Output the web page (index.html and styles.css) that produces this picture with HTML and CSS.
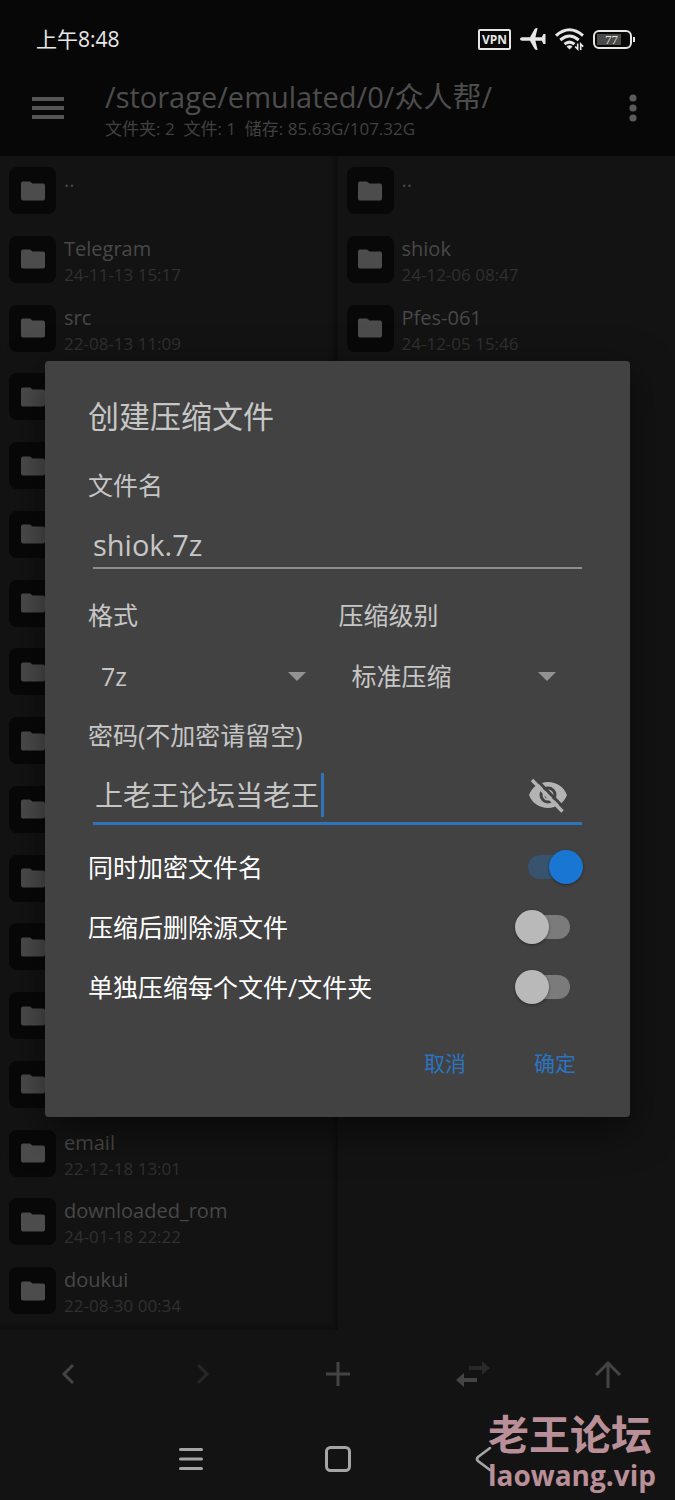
FILE: index.html
```html
<!DOCTYPE html>
<html lang="zh-CN">
<head>
<meta charset="utf-8">
<meta name="viewport" content="width=device-width, initial-scale=1">
<title>创建压缩文件</title>
<link rel="stylesheet" href="styles.css">
</head>
<body>
<svg class="defs" aria-hidden="true">
  <symbol id="folder" viewBox="0 0 24 20"><path d="M2 0.500h7l2.500 2H22a2 2 0 0 1 2 2V17.500a2 2 0 0 1-2 2H2a2 2 0 0 1-2-2v-15a2 2 0 0 1 2-2z"/></symbol>
</svg>
<div class="screen">
  <header class="top">
    <div class="status">
      <time class="clock">上午8:48</time>
      <div class="status-icons">
        <span class="vpn">VPN</span>
        <svg width="26" height="22" viewBox="0 0 26 22" fill="#e6e6e6"><path d="M0 11Q0 9.300 2.200 9.300H10L14.500 1.200Q15.200 0 17.600 0L15.400 9.300H21.800L23.400 6H25.500V16H23.400L21.800 12.700H15.400L17.600 22Q15.200 22 14.500 20.800L10 12.700H2.200Q0 12.700 0 11z"/></svg>
        <svg width="29" height="22" viewBox="0 0 29 22" fill="none" stroke="#e6e6e6" stroke-width="3"><path d="M1 7.700Q14.500-4.200 28 7.700M5.300 12Q14.500 4 23.700 12M9.500 16.200Q14.500 12 19.500 16.200"/><path d="M11.500 18.500Q14.500 16 17.500 18.500L14.500 21.500z" fill="#e6e6e6" stroke="none"/><path d="M22.700 15.500V21L20.200 18.600M25.700 22V16L28.200 18.600" stroke-width="1.600"/></svg>
        <span class="battery"><span class="battery-level">77</span></span>
      </div>
    </div>
    <div class="appbar">
      <button class="icon-btn" aria-label="菜单"><svg width="32" height="24" viewBox="0 0 32 24" fill="#555"><path d="M0 1h32v4H0zM0 10h32v4H0zM0 19h32v4H0z"/></svg></button>
      <div class="heading">
        <h1 class="path">/storage/emulated/0/众人帮/</h1>
        <p class="stats">文件夹: 2  文件: 1  储存: 85.63G/107.32G</p>
      </div>
      <button class="icon-btn" aria-label="更多"><svg width="8" height="30" viewBox="0 0 8 30" fill="#5a5a5a"><circle cx="4" cy="5" r="3.600"/><circle cx="4" cy="15" r="3.600"/><circle cx="4" cy="25" r="3.600"/></svg></button>
    </div>
  </header>

  <main class="panes">
    <ul class="pane pane-left">
      <li class="row"><span class="tile"><svg class="folder"><use href="#folder"/></svg></span><span class="name">..</span></li>
      <li class="row"><span class="tile"><svg class="folder"><use href="#folder"/></svg></span><div><div class="name">Telegram</div><div class="date">24-11-13 15:17</div></div></li>
      <li class="row"><span class="tile"><svg class="folder"><use href="#folder"/></svg></span><div><div class="name">src</div><div class="date">22-08-13 11:09</div></div></li>
      <li class="row"><span class="tile"><svg class="folder"><use href="#folder"/></svg></span></li>
      <li class="row"><span class="tile"><svg class="folder"><use href="#folder"/></svg></span></li>
      <li class="row"><span class="tile"><svg class="folder"><use href="#folder"/></svg></span></li>
      <li class="row"><span class="tile"><svg class="folder"><use href="#folder"/></svg></span></li>
      <li class="row"><span class="tile"><svg class="folder"><use href="#folder"/></svg></span></li>
      <li class="row"><span class="tile"><svg class="folder"><use href="#folder"/></svg></span></li>
      <li class="row"><span class="tile"><svg class="folder"><use href="#folder"/></svg></span></li>
      <li class="row"><span class="tile"><svg class="folder"><use href="#folder"/></svg></span></li>
      <li class="row"><span class="tile"><svg class="folder"><use href="#folder"/></svg></span></li>
      <li class="row"><span class="tile"><svg class="folder"><use href="#folder"/></svg></span></li>
      <li class="row"><span class="tile"><svg class="folder"><use href="#folder"/></svg></span></li>
      <li class="row"><span class="tile"><svg class="folder"><use href="#folder"/></svg></span><div><div class="name">email</div><div class="date">22-12-18 13:01</div></div></li>
      <li class="row"><span class="tile"><svg class="folder"><use href="#folder"/></svg></span><div><div class="name">downloaded_rom</div><div class="date">24-01-18 22:22</div></div></li>
      <li class="row"><span class="tile"><svg class="folder"><use href="#folder"/></svg></span><div><div class="name">doukui</div><div class="date">22-08-30 00:34</div></div></li>
    </ul>
    <ul class="pane">
      <li class="row"><span class="tile"><svg class="folder"><use href="#folder"/></svg></span><span class="name">..</span></li>
      <li class="row"><span class="tile"><svg class="folder"><use href="#folder"/></svg></span><div><div class="name">shiok</div><div class="date">24-12-06 08:47</div></div></li>
      <li class="row"><span class="tile"><svg class="folder"><use href="#folder"/></svg></span><div><div class="name">Pfes-061</div><div class="date">24-12-05 15:46</div></div></li>
    </ul>
  </main>

  <footer>
    <div class="toolbar">
      <button class="icon-btn" aria-label="后退"><svg width="14" height="20" viewBox="0 0 14 20" fill="none" stroke="#444" stroke-width="3"><path d="M12 1L3 10l9 9"/></svg></button>
      <button class="icon-btn" aria-label="前进" disabled><svg width="14" height="20" viewBox="0 0 14 20" fill="none" stroke="#262626" stroke-width="3"><path d="M2 1l9 9-9 9"/></svg></button>
      <button class="icon-btn" aria-label="新建"><svg width="24" height="24" viewBox="0 0 24 24" fill="none" stroke="#444" stroke-width="3"><path d="M12 0v24M0 12h24"/></svg></button>
      <button class="icon-btn" aria-label="同步"><svg width="34" height="26" viewBox="0 0 34 26"><path fill="#292929" d="M13 5h13V0l8 7-8 7V9H13z"/><path fill="#444" d="M21 17H8v-5l-8 7 8 7v-5h13z"/></svg></button>
      <button class="icon-btn" aria-label="上级"><svg width="28" height="28" viewBox="0 0 28 28" fill="none" stroke="#444" stroke-width="3"><path d="M14 28V2M2 15L14 3l12 12"/></svg></button>
    </div>
    <nav class="sysnav">
      <button class="icon-btn" aria-label="最近任务"><svg width="24" height="24" viewBox="0 0 24 24" stroke="#a5a5a5" stroke-width="3" stroke-linecap="round"><path d="M1.500 2.500h21M1.500 12h21M1.500 21.500h21"/></svg></button>
      <button class="icon-btn" aria-label="主屏幕"><svg width="26" height="26" viewBox="0 0 26 26" fill="none" stroke="#a5a5a5" stroke-width="3"><rect x="1.500" y="1.500" width="23" height="23" rx="4"/></svg></button>
      <button class="icon-btn" aria-label="返回"><svg width="18" height="26" viewBox="0 0 18 26" fill="none" stroke="#a5a5a5" stroke-width="2.600" stroke-linecap="round"><path d="M15 2L3 11Q1 13 3 15l12 9"/></svg></button>
    </nav>
  </footer>

  <div class="overlay">
    <form class="dialog" role="dialog" aria-labelledby="dlg-title">
      <h2 class="dialog-title" id="dlg-title">创建压缩文件</h2>

      <label class="label" for="filename">文件名</label>
      <input class="text-input filename" id="filename" type="text" value="shiok.7z">

      <div class="options">
        <div>
          <label class="label" for="format">格式</label>
          <div class="select-box">
            <select class="select" id="format"><option>7z</option></select>
            <svg class="arrow" viewBox="0 0 18 9"><path d="M0 0h18L9 9z"/></svg>
          </div>
        </div>
        <div>
          <label class="label" for="level">压缩级别</label>
          <div class="select-box">
            <select class="select" id="level"><option>标准压缩</option></select>
            <svg class="arrow" viewBox="0 0 18 9"><path d="M0 0h18L9 9z"/></svg>
          </div>
        </div>
      </div>

      <label class="label" for="password">密码(不加密请留空)</label>
      <div class="password">
        <input class="text-input password-input" id="password" type="text" value="上老王论坛当老王">
        <span class="caret"></span>
        <button class="icon-btn eye" type="button" aria-label="隐藏密码"><svg width="38" height="32" viewBox="0 0 38 32"><path fill="#b4b4b4" fill-rule="evenodd" d="M0 16C3 8 10.500 3 19 3s16 5 19 13c-3 8-10.500 13-19 13S3 24 0 16zM19 7.500a8.500 8.500 0 1 0 0 17 8.500 8.500 0 0 0 0-17z"/><circle cx="19" cy="16" r="5.500" fill="#b4b4b4"/><circle cx="18" cy="17" r="2.500" fill="#6a6a6a"/><path d="M6-1l31 32" stroke="#424242" stroke-width="3"/><path d="M3 1l30.500 31.500" stroke="#b4b4b4" stroke-width="3.400"/></svg></button>
      </div>

      <div class="switches">
        <label class="switch-row"><span class="switch-text">同时加密文件名</span><input class="switch" type="checkbox" checked></label>
        <label class="switch-row"><span class="switch-text">压缩后删除源文件</span><input class="switch" type="checkbox"></label>
        <label class="switch-row"><span class="switch-text">单独压缩每个文件/文件夹</span><input class="switch" type="checkbox"></label>
      </div>

      <div class="actions">
        <button class="action" type="button">取消</button>
        <button class="action" type="button">确定</button>
      </div>
    </form>
  </div>

  <div class="watermark">
    <div class="mark-name">老王论坛</div>
    <div class="mark-site">laowang.vip</div>
  </div>
</div>
</body>
</html>
```
FILE: styles.css
```css
* {
  box-sizing: border-box;
}

body {
  margin: 0;
  background: #131313;
  font-family: "Open Sans", "Noto Sans CJK SC", sans-serif;
}

h1, h2, p, ul {
  margin: 0;
  padding: 0;
  font-weight: 400;
}

button, input, select {
  margin: 0;
  padding: 0;
  border: 0;
  outline: 0;
  background: none;
  color: inherit;
  font: inherit;
}

svg {
  display: block;
  overflow: visible;
}

.defs {
  position: absolute;
  width: 0;
  height: 0;
}

.screen {
  position: relative;
  display: flex;
  flex-direction: column;
  min-height: 100vh;
}

.icon-btn {
  display: flex;
  align-items: center;
  justify-content: center;
}

/* Status bar and app bar */

.top {
  background: #070707;
}

.status {
  display: flex;
  align-items: center;
  justify-content: space-between;
  height: 78px;
  padding: 0 43px 2px 36px;
}

.clock {
  color: #e8e8e8;
  font-size: 21px;
}

.status-icons {
  display: flex;
  align-items: center;
  gap: 9px;
  padding-top: 2px;
}

.vpn {
  padding: 0 2px;
  border: 2px solid #e6e6e6;
  border-radius: 2px;
  color: #e6e6e6;
  font-size: 12px;
  font-weight: 700;
  line-height: 17px;
}

.battery {
  position: relative;
  width: 39px;
  height: 19px;
  padding: 2px;
  border: 2px solid #e6e6e6;
  border-radius: 6px;
}

.battery::after {
  content: "";
  position: absolute;
  top: 5px;
  right: -5px;
  width: 2px;
  height: 5px;
  background: #e6e6e6;
}

.battery-level {
  display: block;
  width: 77%;
  padding-left: 8px;
  background: #4a4a4a;
  color: #e6e6e6;
  font-family: "Liberation Serif", serif;
  font-size: 13px;
  line-height: 11px;
}

.appbar {
  display: flex;
  align-items: center;
  height: 78px;
  padding: 0 38px 14px 32px;
}

.appbar > .icon-btn {
  margin-bottom: 4px;
}

.heading {
  flex: 1;
  padding-left: 41px;
}

.path {
  color: #4d4d4d;
  font-size: 29px;
  line-height: 38px;
}

.stats {
  color: #414141;
  font-size: 17px;
  line-height: 26px;
  white-space: pre;
}

/* File panes */

.panes {
  display: grid;
  flex: 1;
  grid-template-columns: 1fr 1fr;
}

.pane {
  display: grid;
  grid-template-rows: repeat(17, 1fr);
  padding-bottom: 5px;
  background: #131313;
  list-style: none;
}

.pane-left {
  box-shadow: inset -4px -4px 4px #0e0e0e;
}

.row {
  display: flex;
  gap: 8px;
  padding: 11px 9px 0;
}

.tile {
  display: flex;
  flex: none;
  align-items: center;
  justify-content: center;
  width: 47px;
  height: 47px;
  border-radius: 8px;
  background: #080808;
}

.folder {
  width: 24px;
  height: 20px;
  fill: #4c4c4c;
}

.name {
  color: #484848;
  font-size: 20px;
  line-height: 26px;
}

.date {
  color: #303030;
  font-size: 17px;
  line-height: 26px;
}

/* Bottom bars */

.toolbar {
  display: grid;
  grid-template-columns: repeat(5, 1fr);
  height: 88px;
}

.sysnav {
  display: grid;
  grid-template-columns: repeat(3, 1fr);
  width: 65%;
  height: 82px;
  margin: 0 auto;
}

/* Dialog */

.overlay {
  position: absolute;
  inset: 0;
  display: flex;
  align-items: center;
  padding: 0 45px 22px;
}

.dialog {
  flex: 1;
  padding: 34px 43px 32px;
  border-radius: 4px;
  background: #424242;
  box-shadow: 0 12px 40px #0008;
  color: #c6c6c6;
}

.dialog-title {
  margin-bottom: 32px;
  font-size: 31px;
  line-height: 42px;
}

.label {
  display: block;
  font-size: 25px;
  line-height: 32px;
}

.text-input {
  font-size: 28px;
}

.filename {
  display: block;
  width: calc(100% - 10px);
  height: 45px;
  margin: 23px 5px 30px;
  padding-bottom: 3px;
  border-bottom: 2px solid #8e8e8e;
  font-size: 29px;
}

.options {
  display: grid;
  grid-template-columns: 1fr 1fr;
  gap: 2px;
}

.select-box {
  display: grid;
  align-items: center;
  margin: 25px 0 23px;
}

.select {
  grid-area: 1 / 1;
  height: 40px;
  padding-left: 13px;
  appearance: none;
  font-size: 25px;
}

.arrow {
  grid-area: 1 / 1;
  justify-self: end;
  width: 18px;
  height: 9px;
  margin-right: 31px;
  fill: #929292;
  pointer-events: none;
}

.password {
  display: flex;
  align-items: center;
  margin: 22px 5px 12px;
  padding-bottom: 5px;
  border-bottom: 3px solid #2f73bd;
}

.password-input {
  width: 228px;
  height: 44px;
  padding: 0 0 2px 2px;
}

.caret {
  width: 3px;
  height: 44px;
  background: #2f73bd;
}

.eye {
  margin: 0 15px 0 auto;
}

.switch-row {
  display: flex;
  align-items: center;
  justify-content: space-between;
  height: 60px;
  padding-right: 4px;
  color: #fff;
  font-size: 25px;
}

.switch-text {
  padding-bottom: 2px;
}

.switch {
  display: grid;
  align-items: center;
  width: 68px;
  height: 34px;
  appearance: none;
}

.switch::before {
  content: "";
  grid-area: 1 / 1;
  justify-self: center;
  width: 42px;
  height: 24px;
  border-radius: 12px;
  background: #7b7b7b;
}

.switch::after {
  content: "";
  grid-area: 1 / 1;
  width: 34px;
  height: 34px;
  border-radius: 50%;
  background: #b9b9b9;
  box-shadow: 0 1px 3px #0006;
}

.switch:checked::before {
  background: #38536e;
}

.switch:checked::after {
  justify-self: end;
  background: #1976d2;
}

.actions {
  display: flex;
  justify-content: flex-end;
  gap: 46px;
  margin-top: 24px;
}

.action {
  width: 64px;
  height: 44px;
  padding-bottom: 2px;
  color: #2a74c2;
  font-size: 21px;
}

/* Watermark */

.watermark {
  position: absolute;
  right: 19px;
  bottom: 8px;
  color: #b98f98;
  font-weight: 700;
}

.mark-name {
  font-size: 41px;
  line-height: 48px;
}

.mark-site {
  font-size: 28px;
  line-height: 34px;
}
```
